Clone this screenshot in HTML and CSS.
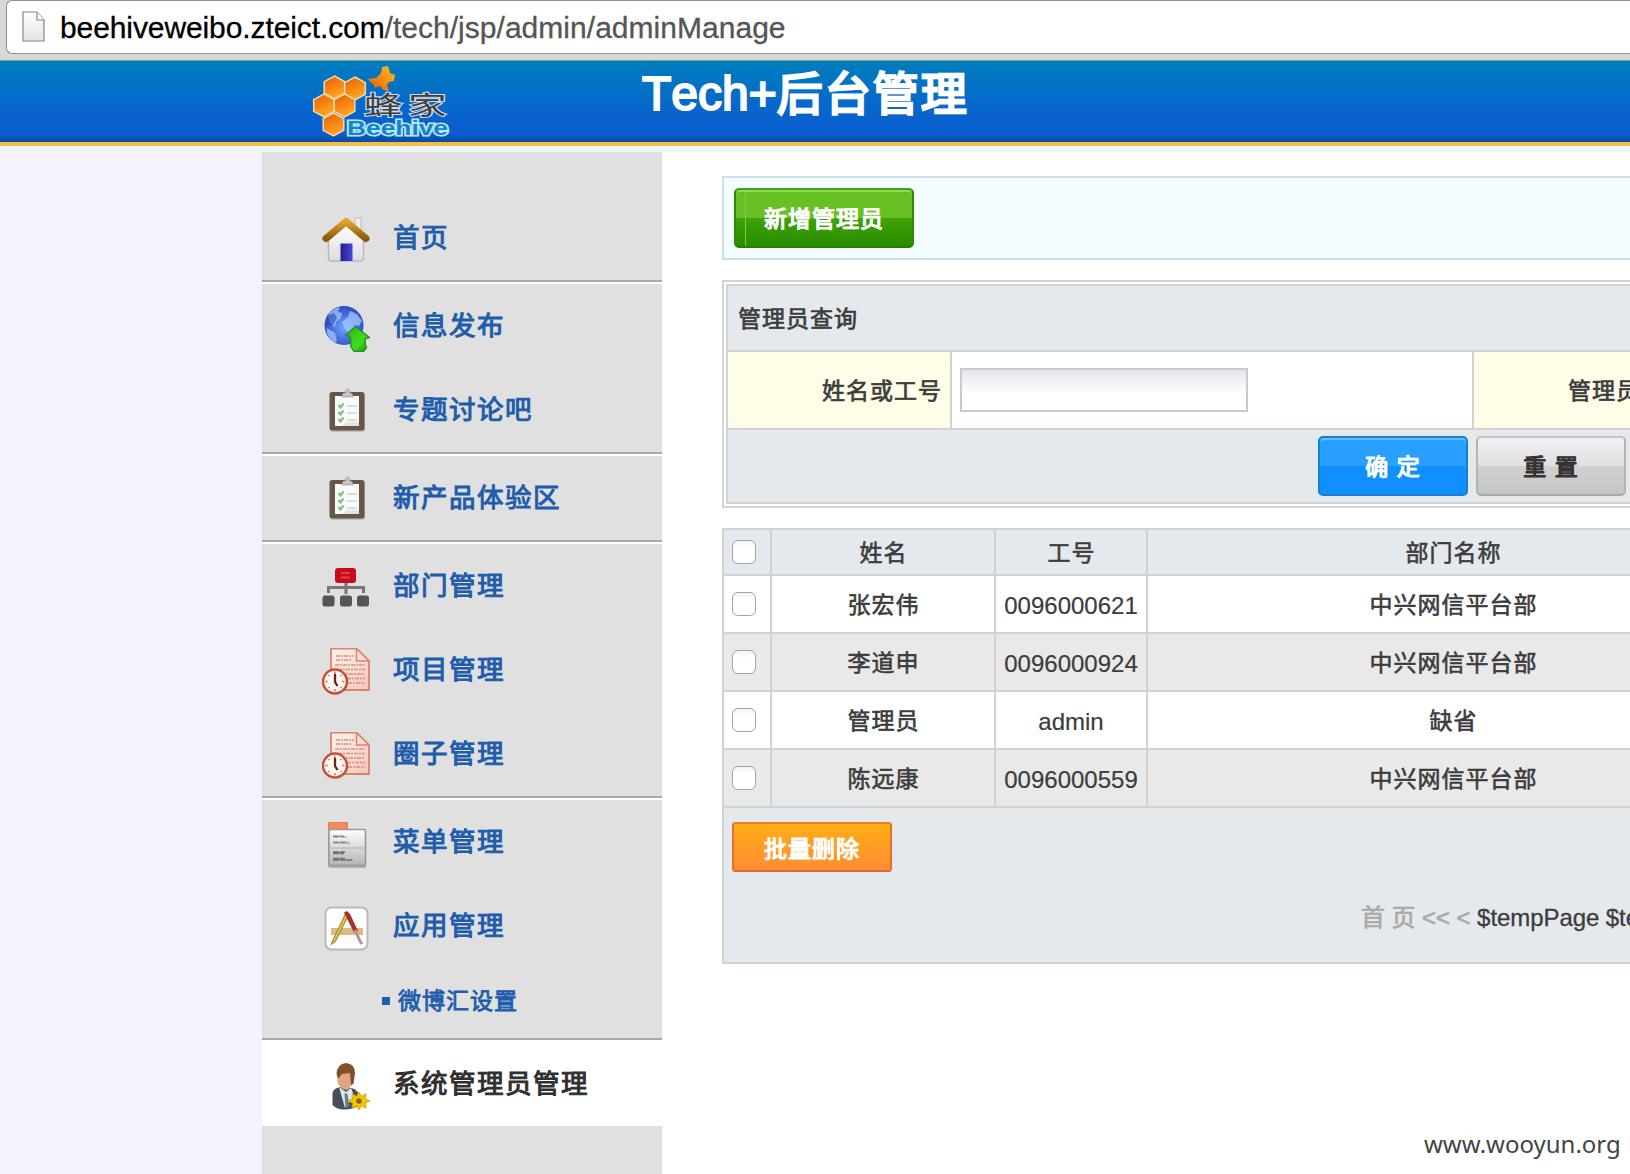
FILE: index.html
```html
<!DOCTYPE html>
<html lang="zh-CN">
<head>
<meta charset="utf-8">
<title>Tech+后台管理</title>
<link rel="stylesheet" href="styles.css">
</head>
<body>
<svg class="defs" width="0" height="0" aria-hidden="true">
  <defs>
    <linearGradient id="roof" x1="0" y1="0" x2="0" y2="1"><stop offset="0" stop-color="#e2a32c"/><stop offset="1" stop-color="#8d5a10"/></linearGradient>
    <linearGradient id="wall" x1="0" y1="0" x2="0" y2="1"><stop offset="0" stop-color="#ffffff"/><stop offset="1" stop-color="#dcdce2"/></linearGradient>
    <linearGradient id="door" x1="0" y1="0" x2="1" y2="0"><stop offset="0" stop-color="#231f8f"/><stop offset="1" stop-color="#4a42dc"/></linearGradient>
    <radialGradient id="globe" cx=".5" cy=".55" r=".55"><stop offset="0" stop-color="#6fa4ff"/><stop offset="1" stop-color="#2c49c4"/></radialGradient>
    <linearGradient id="arrow" x1="0" y1="0" x2="1" y2="1"><stop offset="0" stop-color="#2fae1c"/><stop offset=".6" stop-color="#3fe01c"/><stop offset="1" stop-color="#189016"/></linearGradient>
    <linearGradient id="sheet" x1="0" y1="0" x2="0" y2="1"><stop offset="0" stop-color="#ffffff"/><stop offset="1" stop-color="#b4b4b4"/></linearGradient>
    <linearGradient id="paper" x1="0" y1="0" x2="1" y2="1"><stop offset="0" stop-color="#fdf3ef"/><stop offset="1" stop-color="#f6c6b9"/></linearGradient>
    <linearGradient id="comb" x1="0" y1="0" x2=".4" y2="1"><stop offset="0" stop-color="#e85c00"/><stop offset="1" stop-color="#ffa622"/></linearGradient>
    <linearGradient id="bee" x1="1" y1="0" x2="0" y2="1"><stop offset="0" stop-color="#ffc21a"/><stop offset="1" stop-color="#e2570c"/></linearGradient>
    <linearGradient id="page" x1="0" y1="0" x2="0" y2="1"><stop offset="0" stop-color="#ffffff"/><stop offset="1" stop-color="#e2e3e8"/></linearGradient>
    <symbol id="clipboard" viewBox="0 0 48 48">
      <rect x="8" y="5" width="35" height="39" rx="2.5" fill="#999" opacity=".5"/>
      <rect x="7.500" y="4" width="35" height="38.500" rx="2.500" fill="#685746"/>
      <path d="M13 8h24v30H13z" fill="#fbfbfb"/>
      <path d="M24 34h13v4H20z" fill="#e4e4e4"/>
      <path d="M19.500 9l2-4h2.500a2.300 2.300 0 1 1 3 0h2.500l2 4z" fill="#c4c4c4" stroke="#a5a5a5" stroke-width=".7"/>
      <path d="M16.500 17l2 2.500 3-4M16.500 24l2 2.500 3-4M16.500 31l2 2.500 3-4" fill="none" stroke="#7cc47a" stroke-width="2.200"/>
      <path d="M25 18h10M25 25h10M25 32h10" stroke="#dcdcde" stroke-width="2"/>
    </symbol>
    <symbol id="docclock" viewBox="0 0 48 48">
      <path d="M9 0.500h25.500l12.500 12.500v29H9z" fill="url(#paper)" stroke="#dc8370" stroke-width="1.800"/>
      <path d="M34.500 0.500v12.500h12.500z" fill="#f7ddd5" stroke="#dc8370" stroke-width="1.500"/>
      <path d="M14 8h18M14 12h16M13 17h30M16 21.500h27M19 26h24M25 30.500h18M26 35h17" fill="none" stroke="#d98e7e" stroke-width="1.500" stroke-dasharray="4 1 2 1"/>
      <circle cx="13" cy="33.500" r="12" fill="#fff7f2" stroke="#c65038" stroke-width="2.500"/>
      <path d="M13 23.500v3M13 41v2.500M3.300 33.500h2.500M20 33.500h2.500M6.500 27l1 1M19.500 27l-1 1M6.500 40l1-1M19.500 40l-1-1" stroke="#c77862" stroke-width="1.500"/>
      <path d="M13 26v8l2.500 4" fill="none" stroke="#6d2118" stroke-width="2.300"/>
    </symbol>
  </defs>
</svg>

<div class="browser-bar">
  <div class="address">
    <svg class="page-icon" width="24" height="34" viewBox="0 0 24 34"><path d="M1 1h14l7 8v21H1z" fill="url(#page)" stroke="#85868a" stroke-width="1.200"/><path d="M15 1v8h7" fill="#fff" stroke="#85868a" stroke-width="1.200"/></svg>
    <span class="host">beehiveweibo.zteict.com</span><span class="path">/tech/jsp/admin/adminManage</span>
  </div>
</div>

<header class="header">
  <svg class="logo" width="144" height="78" viewBox="311 62 144 78">
    <g fill="url(#comb)" stroke="#f3d9b0" stroke-width="1.500">
      <path d="M334.500 76l10.300 5.700v11.600l-10.300 5.700-10.300-5.700V81.700z"/>
      <path d="M355 77l10.300 5.700v11.600L355 100l-10.300-5.700V82.700z"/>
      <path d="M324 94l10.300 5.700v11.600L324 117l-10.300-5.700V99.700z"/>
      <path d="M344.500 94l10.300 5.700v11.600L344.500 117l-10.300-5.700V99.700z"/>
      <path d="M333.500 113l10.300 5.700v11.600L333.500 136l-10.300-5.700v-11.600z"/>
    </g>
    <path d="M367 79l9-1 5-5 1-6 6-1 2 7 5 2-1 6-5 1-2 3 2 6-6-1-3-4-5 2-2-4z" fill="url(#bee)"/>
    <text class="logo-cn" transform="translate(364 115) scale(1.480 1)" x="0 29.700" y="0">蜂家</text>
    <text class="logo-en" x="347" y="135" textLength="101" lengthAdjust="spacingAndGlyphs">Beehive</text>
  </svg>
  <h1 class="title">Tech+<span class="title-cn">后台管理</span></h1>
</header>

<div class="main">
  <nav class="sidebar">
    <div class="group group-first">
      <a class="item"><svg class="icon" viewBox="0 0 48 48">
        <path d="M33 2h6v13H33z" fill="#eee" stroke="#bbb"/>
        <path d="M6.500 24L24 9l17.500 15v18q0 3-3 3h-29q-3 0-3-3z" fill="url(#wall)" stroke="#b9b9c0" stroke-width="1.500"/>
        <path d="M4 22.500L24 5.500l20 17" fill="none" stroke="url(#roof)" stroke-width="7" stroke-linecap="round" stroke-linejoin="round"/>
        <path d="M18.500 27.500h12V45h-12z" fill="url(#door)"/></svg>首页</a>
    </div>
    <div class="group">
      <a class="item"><svg class="icon" viewBox="0 0 48 48">
        <circle cx="22" cy="21.500" r="19.500" fill="url(#globe)"/>
        <path d="M6 11q5-7 12-8l-2 5 4 1-1 5-5 4-1 5-5-4zM5 24l8 5 2 8-2 2q-6-4-8-10zM20 18l6-5 2-6 7 3 5 7-3 5-4-1-2 5-6 2-3-5z" fill="#a9ceff" opacity=".7"/>
        <path d="M6 11l6-2 3 5-4 7-8 1q0-6 3-11z" fill="#2447b5" opacity=".6"/>
        <path d="M33.500 22.500L23.500 31.500l4.500 1q1.500 6 .5 9.500l3.500 5.500h9.500l3-4q-2-4-1-9l4-1z" fill="url(#arrow)" stroke="#278d27" stroke-width="1.300" stroke-linejoin="round"/></svg>信息发布</a>
      <a class="item"><svg class="icon"><use href="#clipboard"/></svg>专题讨论吧</a>
    </div>
    <div class="group">
      <a class="item"><svg class="icon"><use href="#clipboard"/></svg>新产品体验区</a>
    </div>
    <div class="group">
      <a class="item"><svg class="icon" viewBox="0 0 48 48">
        <path d="M24 18v12M6.500 29v-5.500h35V29" fill="none" stroke="#77777a" stroke-width="3"/>
        <rect x="13" y="4" width="21" height="15" rx="3" fill="#ca0a1c"/><path d="M19 9h9M19 13.500h9" stroke="#e2404c" stroke-width="2"/>
        <g fill="#555558"><rect x=".5" y="31.500" width="12" height="11" rx="2.500"/><rect x="18" y="31.500" width="12" height="11" rx="2.500"/><rect x="35" y="31.500" width="12" height="11" rx="2.500"/></g></svg>部门管理</a>
      <a class="item"><svg class="icon"><use href="#docclock"/></svg>项目管理</a>
      <a class="item"><svg class="icon"><use href="#docclock"/></svg>圈子管理</a>
    </div>
    <div class="group">
      <a class="item"><svg class="icon" viewBox="0 0 48 48">
        <rect x="6" y="12" width="38" height="36" rx="2" fill="#777" opacity=".45"/>
        <path d="M6.500 2.500h19v8h-19z" fill="#f58a5c" stroke="#dc8058"/>
        <rect x="7" y="9.500" width="36.500" height="36" rx="1.500" fill="url(#sheet)" stroke="#989898" stroke-width="1.600"/>
        <path d="M11 16h11M11 17h14M11 22h14M11 23h17" stroke="#888" stroke-width="1.200" stroke-dasharray="6 .6"/>
        <path d="M9 28h33" stroke="#b0b0b0"/><path d="M11 32h12M11 33.500h11M11 38.500h12M11 40h20" stroke="#707070" stroke-width="1.400" stroke-dasharray="6 .6"/></svg>菜单管理</a>
      <a class="item"><svg class="icon" viewBox="0 0 48 48">
        <rect x="3.500" y="3.500" width="42" height="42" rx="6" fill="#fdfdfd" stroke="#b9b9bb" stroke-width="2"/>
        <path d="M9 24h32v7H9z" fill="#deb886"/>
        <path d="M23.500 10L11.500 35l-2 5 4-3L26 12z" fill="#e3cd3c" stroke="#9c8b44" stroke-width="1.200"/>
        <path d="M22 8.500l3-1.500 3 3 8 17-4 1.500z" fill="#aa2d32"/><path d="M33 26l5 11 2 3" fill="none" stroke="#b5979a" stroke-width="3"/></svg>应用管理</a>
      <a class="subitem"><span class="bullet"></span>微博汇设置</a>
    </div>
    <div class="group group-active">
      <a class="item"><svg class="icon" viewBox="0 0 48 48">
        <path d="M10.500 43V31q1-5 8-6l11 1q7 2 8 9v8q-7 5-17 4.500-6-.5-10-4.500z" fill="#46505b"/>
        <path d="M17 25l7 5 5-4 3 8-9 12z" fill="#dfe6ec"/><path d="M22.500 31l3 1 2 12-4 2z" fill="#6c7b88"/>
        <path d="M16 9l14-1 .5 10q-1 9-6 10-7-1-9-8z" fill="#e0a67e"/>
        <path d="M14.500 12Q15 2 24 1q9 1 9 10l-1.500 11-2.500 1-1-12-8 1-4 5z" fill="#80502d"/>
        <path d="M37 30l2.300 4.200 4.700-2.400-.5 5.200 4.500 2-4.500 2 .500 5.200-4.700-2.400L37 48l-2.400-4.200-4.600 2.400.5-5.200-4.500-2 4.500-2-.5-5.200 4.600 2.400z" fill="#f2c500" stroke="#d6a000" stroke-width=".8"/>
        <circle cx="37" cy="39" r="2.700" fill="#83630e"/></svg>系统管理员管理</a>
    </div>
  </nav>

  <section class="content">
    <div class="toolbar"><button class="btn btn-green">新增管理员</button></div>

    <div class="search">
      <div class="search-inner">
        <div class="search-title">管理员查询</div>
        <div class="search-row">
          <label class="label">姓名或工号</label>
          <div class="field"><input class="input" type="text" aria-label="姓名或工号"></div>
          <label class="label label-next">管理员</label>
        </div>
        <div class="search-actions"><button class="btn btn-blue">确 定</button><button class="btn btn-grey">重 置</button></div>
      </div>
    </div>

    <div class="list">
      <div class="row row-head"><span class="cell check"><i class="box"></i></span><span class="cell">姓名</span><span class="cell">工号</span><span class="cell">部门名称</span></div>
      <div class="row"><span class="cell check"><i class="box"></i></span><span class="cell">张宏伟</span><span class="cell number">0096000621</span><span class="cell">中兴网信平台部</span></div>
      <div class="row row-alt"><span class="cell check"><i class="box"></i></span><span class="cell">李道申</span><span class="cell number">0096000924</span><span class="cell">中兴网信平台部</span></div>
      <div class="row"><span class="cell check"><i class="box"></i></span><span class="cell">管理员</span><span class="cell number">admin</span><span class="cell">缺省</span></div>
      <div class="row row-alt"><span class="cell check"><i class="box"></i></span><span class="cell">陈远康</span><span class="cell number">0096000559</span><span class="cell">中兴网信平台部</span></div>
      <div class="list-foot">
        <button class="btn btn-orange">批量删除</button>
        <div class="pager"><span class="pager-off">首 页 &lt;&lt; &lt;</span> $tempPage $te</div>
      </div>
    </div>
  </section>
</div>
<div class="watermark">www.wooyun.org</div>
</body>
</html>
```
FILE: styles.css
```css
* { box-sizing: border-box; }

html, body { height: 100%; }

body {
  margin: 0;
  display: flex;
  flex-direction: column;
  overflow: hidden;
  position: relative;
  background: #f3f3fe;
  color: #3c3c3c;
  font: 24px/32px "Liberation Sans", "Noto Sans CJK SC", sans-serif;
  font-kerning: none;
}

.defs { position: absolute; }

/* Browser address bar */
.browser-bar {
  flex: none;
  height: 61px;
  padding-left: 6px;
  background: #d8d8d8;
  border-bottom: 1px solid #8b9aa0;
}

.address {
  display: flex;
  align-items: center;
  height: 54px;
  padding: 2px 0 0 15px;
  background: #fff;
  border: 1px solid #8f8f8f;
  border-right: 0;
  border-radius: 6px 0 0 6px;
  font-size: 30px;
  white-space: nowrap;
}

.page-icon { margin-right: 14px; }
.host { color: #000; -webkit-text-stroke: .3px #000; letter-spacing: -.1px; }
.path { color: #555; -webkit-text-stroke: .3px #555; letter-spacing: .03px; }

/* Page header */
.header {
  flex: none;
  display: flex;
  height: 85px;
  padding-left: 311px;
  background: linear-gradient(#007dbd, #0b5bd2 90%, #0a50b4 96%, #0a4ca6);
  border-bottom: 4px solid #f0c040;
}

.logo { margin-top: 1px; }

.logo-cn {
  font: 400 26px "Noto Sans CJK SC", sans-serif;
  fill: #403a38;
  stroke: #c8dcf0;
  stroke-width: 2px;
  paint-order: stroke;
}

.logo-en {
  font: bold 20px "Liberation Sans", sans-serif;
  fill: #1583c6;
  stroke: #b8e8ff;
  stroke-width: 3px;
  paint-order: stroke;
}

.title {
  margin: 0 0 0 187px;
  color: #fff;
  font-size: 48px;
  font-weight: 400;
  line-height: 66px;
  -webkit-text-stroke: 2px #fff;
}

.title-cn {
  font-size: 46px;
  letter-spacing: 2px;
  -webkit-text-stroke: 2.500px #fff;
}

/* Columns */
.main {
  flex: 1;
  display: flex;
  min-height: 0;
  padding: 6px 0 0 262px;
}

.sidebar {
  flex: none;
  width: 400px;
  background: #e0e0e0;
}

.group {
  border-top: 2px solid #fff;
  border-bottom: 2px solid #a8a8a8;
}

.group-first { padding-top: 44px; border-top: 0; }
.group-active { background: #fff; border-bottom: 0; }

.item {
  display: flex;
  align-items: center;
  height: 84px;
  padding-left: 60px;
  color: #205cac;
  font-size: 26.500px;
  letter-spacing: 1.500px;
  -webkit-text-stroke: 1px currentColor;
}

.group-active .item { color: #303030; }

.icon {
  flex: none;
  width: 48px;
  height: 48px;
  margin: 4px 23px 0 0;
  -webkit-text-stroke: 0;
}

.subitem {
  display: flex;
  align-items: center;
  height: 70px;
  padding: 0 0 4px 120px;
  color: #205cac;
  font-size: 23px;
  letter-spacing: 1px;
  -webkit-text-stroke: .8px currentColor;
}

.bullet {
  width: 8px;
  height: 8px;
  margin-right: 8px;
  background: #1c60b6;
}

.content {
  flex: 1;
  min-width: 0;
  padding: 24px 0 0 60px;
  overflow: hidden;
  background: #fff;
}

/* Buttons */
.btn {
  height: 60px;
  padding: 2px 0 0;
  border: 2px solid;
  border-radius: 5px;
  color: #fff;
  font: inherit;
  font-size: 23px;
  letter-spacing: 1px;
  -webkit-text-stroke: 1.200px currentColor;
}

.btn-green {
  width: 180px;
  background:
    linear-gradient(90deg, transparent 9px, #7cc850 9px, #7cc850 10px, transparent 10px),
    linear-gradient(#68c024 0 50%, #3fa408 50%, #288c00);
  border-color: #48a018 #2c8a08 #287c04;
  box-shadow: inset 0 2px 0 #8cdc50;
}

.btn-blue {
  width: 150px;
  background: linear-gradient(#28a0ff 0 50%, #1090ff 50%);
  border-color: #1680cc;
  box-shadow: inset 0 2px 0 #60c0ff;
}

.btn-grey {
  width: 150px;
  background: linear-gradient(#f0f0f0, #e0e0e0 50%, #d2d2d2 50%, #c4c4c4);
  border-color: #c4c4c4 #b4b4b4 #a8a8a8;
  color: #333;
}

.btn-orange {
  width: 160px;
  height: 50px;
  padding-top: 3px;
  background: linear-gradient(#ffae14, #ff8c34);
  border-color: #e88028 #e07030 #dc6c34;
  border-radius: 3px;
}

/* Toolbar */
.toolbar {
  height: 84px;
  padding: 10px;
  background: #f3fcff;
  border: 2px solid #cce0ea;
  border-right: 0;
}

/* Search form */
.search {
  margin-top: 20px;
  padding: 2px 0 2px 2px;
  border: 2px solid #d2d4d6;
  border-right: 0;
}

.search-inner {
  background: #e4e9ed;
  border: 2px solid #d0d2d4;
  border-right: 0;
  font-size: 23px;
  letter-spacing: 1px;
  -webkit-text-stroke: .7px currentColor;
}

.search-title {
  height: 64px;
  padding-left: 10px;
  line-height: 67px;
}

.search-row {
  display: grid;
  grid-template-columns: 224px 522px 1fr;
  grid-template-rows: 76px;
  border: solid #d0d2d4;
  border-width: 2px 0;
}

.label {
  padding-right: 8px;
  background: #fffce8;
  border-right: 2px solid #d0d2d4;
  line-height: 78px;
  text-align: right;
  white-space: nowrap;
}

.label-next { padding: 0 0 0 94px; border-right: 0; text-align: left; }

.field {
  padding: 16px 8px;
  background: #fff;
  border-right: 2px solid #d0d2d4;
}

.input {
  display: block;
  width: 288px;
  height: 44px;
  padding: 0 8px;
  border: 2px solid #c8cad0;
  border-radius: 0;
  background: linear-gradient(#e4e4ef, #fff 60%);
  font: inherit;
}

.search-actions {
  display: flex;
  gap: 8px;
  height: 72px;
  padding: 6px 0 0 590px;
}

/* Administrator list */
.list {
  margin-top: 20px;
  border: 2px solid #d0d2d4;
  border-right: 0;
}

.row {
  display: grid;
  grid-template-columns: 48px 224px 152px 612px;
  height: 58px;
  background: #fff;
  border-bottom: 2px solid #d0d2d4;
}

.row-alt { background: #e9e9e9; }
.row-head { height: 46px; background: #e4e9ed; }

.cell {
  display: flex;
  align-items: center;
  justify-content: center;
  padding: 1px 0 0 1px;
  border-right: 2px solid #d0d2d4;
  font-size: 23px;
  letter-spacing: 1px;
  -webkit-text-stroke: .6px currentColor;
}

.number {
  padding: 3px 0 0;
  font-size: 24px;
  letter-spacing: 0;
  -webkit-text-stroke: .2px currentColor;
}

.check { justify-content: flex-start; padding: 0 0 0 8px; }

.box {
  width: 24px;
  height: 24px;
  background: linear-gradient(#f2f2f2, #fff 30%);
  border: 1.500px solid #a4a4a4;
  border-radius: 6px;
}

.list-foot {
  height: 154px;
  padding: 14px 0 0 8px;
  background: #e4e9ed;
}

.list-foot .btn { display: block; }

.pager {
  margin-top: 30px;
  padding-left: 629px;
  letter-spacing: -.07px;
  white-space: nowrap;
  -webkit-text-stroke: .3px currentColor;
}

.pager-off { color: #aaa; -webkit-text-stroke: .7px currentColor; }

.watermark {
  position: absolute;
  left: 1424px;
  top: 1127px;
  color: #444;
  font: 24px/34px "Noto Sans", sans-serif;
}
```
